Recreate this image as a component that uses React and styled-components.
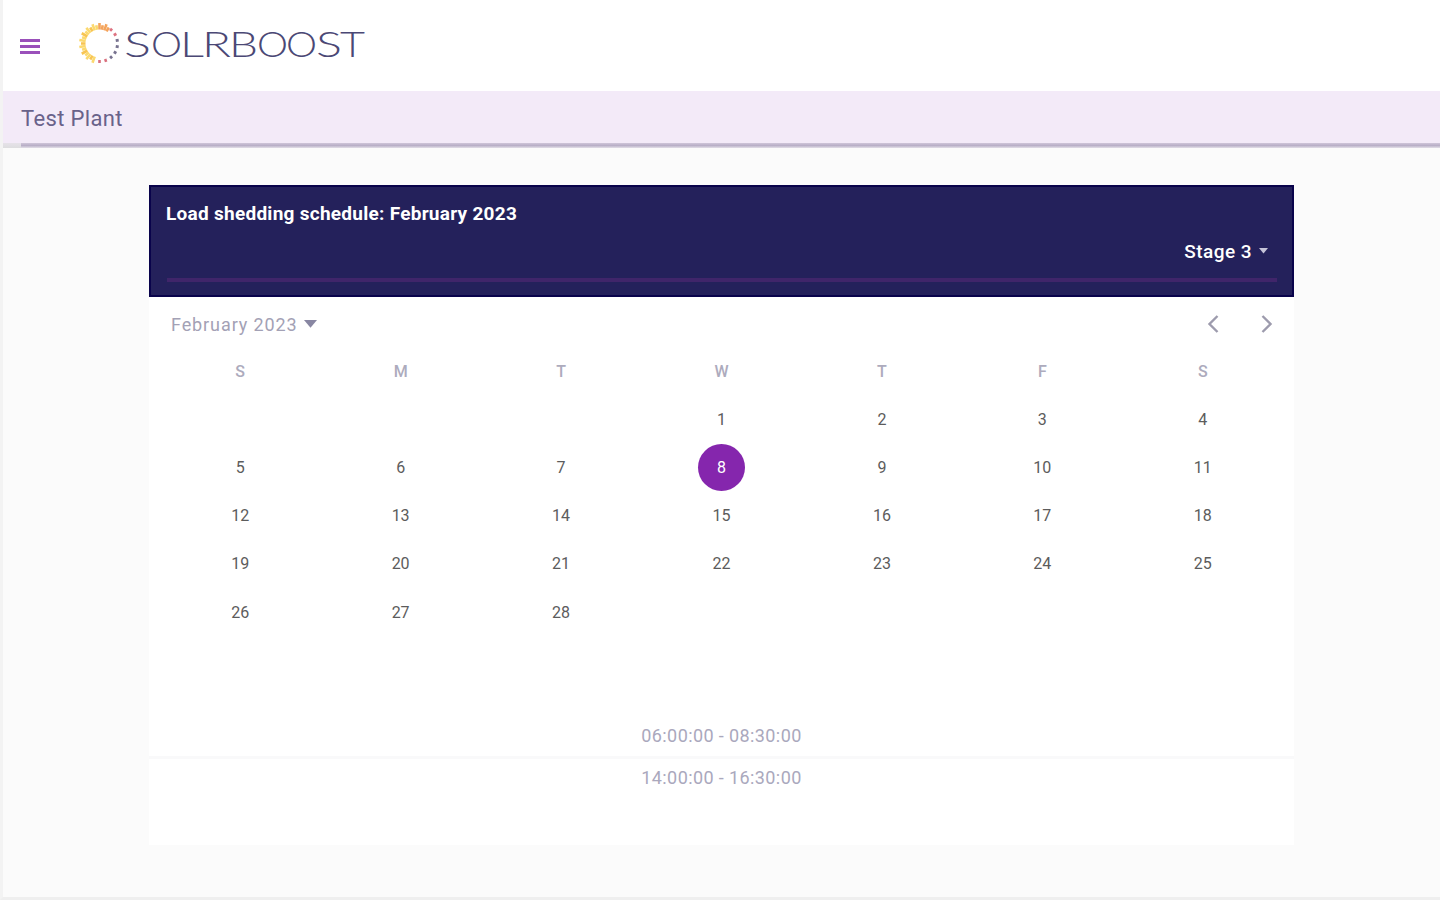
import styled, { createGlobalStyle } from "styled-components";

const GlobalStyle = createGlobalStyle`
    * {
        box-sizing: border-box;
    }

    body {
        margin: 0;
        background: #fbfbfb;
        font-family: Roboto, "Liberation Sans", sans-serif;
    }
`

const Page = styled.div`
    display: flex;
    flex-direction: column;
    height: 900px;
    border-left: 3px solid #f3f3f3;
    border-bottom: 3px solid #efefef;
    overflow: hidden;
`

const TopBar = styled.header`
    display: flex;
    align-items: center;
    height: 91px;
    padding-left: 17px;
    background: #fff;
`

const MenuButton = styled.button`
    display: flex;
    flex-direction: column;
    gap: 3px;
    width: 20px;
    margin: 2px 39px 0 0;
    padding: 0;
    border: none;
    background: none;

    span {
        width: 20px;
        height: 3px;
        background: #9a50ba;
    }
`

const LogoSvg = styled.svg`
    display: block;
    width: 290px;
    height: 44px;
    margin-top: -5px;

    text {
        font-family: Lato, "Liberation Sans", sans-serif;
        font-size: 35px;
        font-weight: 300;
        fill: #4b4875;
    }
`

const PlantBar = styled.div`
    display: flex;
    align-items: center;
    height: 57px;
    padding: 0 0 2px 18px;
    background:
        linear-gradient(#cfc5d9, #b9afc7 50%, #e3dfe8) 18px 100% / 100% 5px no-repeat,
        linear-gradient(#e6e2e9, #dddddf) 0 100% / 18px 5px no-repeat,
        #f3eaf8;
`

const PlantName = styled.h1`
    margin: 0;
    font-size: 22px;
    font-weight: 400;
    letter-spacing: 0.35px;
    color: #69628a;
`

const Card = styled.main`
    width: 1145px;
    height: 660px;
    margin: 37px 0 0 146px;
    background: #fff;
`

const CardHead = styled.div`
    display: flex;
    flex-direction: column;
    height: 112px;
    padding: 16px 15px 0 16px;
    border: 2px solid #09034b;
    background: #24215b;
`

const CardTitle = styled.h2`
    height: 24px;
    margin: -1px 0 0 -1px;
    font-size: 19px;
    line-height: 24px;
    font-weight: 700;
    letter-spacing: 0.27px;
    white-space: nowrap;
    color: #fff;
`

const StageSelect = styled.div`
    display: flex;
    align-items: center;
    justify-content: flex-end;
    gap: 7px;
    height: 56px;
    padding: 0 9px 2px 0;
    border-bottom: 4px solid #40256a;
    font-size: 19px;
    font-weight: 500;
    letter-spacing: 0.45px;
    color: #fff;
`

const MonthBar = styled.div`
    display: flex;
    align-items: center;
    height: 54px;
    padding: 0 20px 0 22px;
    color: #a3a1b5;
`

const MonthLabel = styled.div`
    display: flex;
    align-items: center;
    gap: 6px;
    flex: 1;
    font-size: 18px;
    letter-spacing: 0.9px;
`

const Arrows = styled.div`
    display: flex;
    gap: 40px;
`

const Grid = styled.div`
    display: grid;
    grid-template-columns: repeat(7, 1fr);
    grid-auto-rows: 48.2px;
    height: 368px;
    margin-top: -4px;
    padding: 0 11px;
`

const Weekday = styled.div`
    display: flex;
    align-items: center;
    justify-content: center;
    font-size: 16px;
    font-weight: 500;
    color: #adabbd;
`

const Day = styled.div`
    display: flex;
    align-items: center;
    justify-content: center;
    font-size: 16px;
    color: #5c5c5c;

    span {
        display: flex;
        align-items: center;
        justify-content: center;
        width: 47px;
        height: 47px;
        border-radius: 50%;
        background: ${({ $selected }) => ($selected ? "#8526ad" : "transparent")};
        color: ${({ $selected }) => ($selected ? "#fff" : "inherit")};
    }
`

const Slot = styled.div`
    display: flex;
    align-items: center;
    justify-content: center;
    height: ${({ $divided }) => ($divided ? "44px" : "36px")};
    font-size: 18px;
    letter-spacing: 0.4px;
    color: #aaa8bd;
    border-bottom: ${({ $divided }) => ($divided ? "3px solid #f9f9fa" : "none")};
`

const weekdays = ["S", "M", "T", "W", "T", "F", "S"];
const firstWeekday = 3;
const today = 8;
const slots = ["06:00:00 - 08:30:00", "14:00:00 - 16:30:00"];

// letter, left edge, drawn width
const wordmark = [
    ["S", 45, 27],
    ["O", 72, 31],
    ["L", 101, 24],
    ["R", 123, 29],
    ["B", 150, 29],
    ["O", 178, 31],
    ["O", 207, 31],
    ["S", 237, 26],
    ["T", 261, 25],
];

const rayColor = (angle) => {
    if (angle < 35) return "#f4a45c";
    if (angle < 75) return "#dd7280";
    if (angle < 155) return "#77728f";
    if (angle < 200) return "#d9707e";
    return angle % 30 === 0 ? "#f8c552" : "#fbd96f";
}

function Logo() {
  const rays = Array.from({ length: 36 }, (_, i) => i * 10);

  return (
    <LogoSvg viewBox="0 0 290 44" role="img">
        {rays.map((angle) => {
            const golden = angle < 35 || angle >= 200;
            if (!golden && angle % 20 !== 0) return null;
            return (
                <line
                    key={angle}
                    x1="20.5"
                    x2="20.5"
                    y1={golden ? (angle % 20 === 0 ? 2 : 4) : 3}
                    y2={golden ? 8.5 : 6}
                    stroke={rayColor(angle)}
                    strokeWidth={golden ? 2.6 : 2.6}
                    transform={`rotate(${angle} 20.5 22.5)`}
                />
            )
        })}
        <text y="35.5">
            {wordmark.map(([letter, x, width]) => (
                <tspan key={x} x={x} textLength={width} lengthAdjust="spacingAndGlyphs">{letter}</tspan>
            ))}
        </text>
    </LogoSvg>
  )
}

function Caret({ size, color }) {
  return (
    <svg width={size} height={size * 0.6} viewBox="0 0 10 6">
        <path d="M0 0h10L5 6z" fill={color} />
    </svg>
  )
}

function Chevron({ d }) {
  return (
    <svg width="14" height="20" viewBox="0 0 14 20" fill="none" stroke="#9d9bad" strokeWidth="2.4">
        <path d={d} />
    </svg>
  )
}

function Calendar() {
  const blanks = Array.from({ length: firstWeekday });
  const days = Array.from({ length: 28 }, (_, i) => i + 1);

  return (
    <Grid>
        {weekdays.map((name, i) => <Weekday key={i}>{name}</Weekday>)}
        {blanks.map((_, i) => <Day key={`blank${i}`} />)}
        {days.map((day) => (
            <Day key={day} $selected={day === today}><span>{day}</span></Day>
        ))}
    </Grid>
  )
}

function App() {
  return (
    <>
        <GlobalStyle />
        <Page>
            <TopBar>
                <MenuButton aria-label="Menu"><span /><span /><span /></MenuButton>
                <Logo />
            </TopBar>
            <PlantBar>
                <PlantName>Test Plant</PlantName>
            </PlantBar>
            <Card>
                <CardHead>
                    <CardTitle>Load shedding schedule: February 2023</CardTitle>
                    <StageSelect>
                        Stage 3
                        <Caret size={9} color="#c5c3d8" />
                    </StageSelect>
                </CardHead>
                <MonthBar>
                    <MonthLabel>
                        February 2023
                        <Caret size={13} color="#8886a2" />
                    </MonthLabel>
                    <Arrows>
                        <Chevron d="M11.5 2L3.5 10l8 8" />
                        <Chevron d="M2.5 2l8 8-8 8" />
                    </Arrows>
                </MonthBar>
                <Calendar />
                {slots.map((slot, i) => (
                    <Slot key={slot} $divided={i < slots.length - 1}>{slot}</Slot>
                ))}
            </Card>
        </Page>
    </>
  )
}

export default App
